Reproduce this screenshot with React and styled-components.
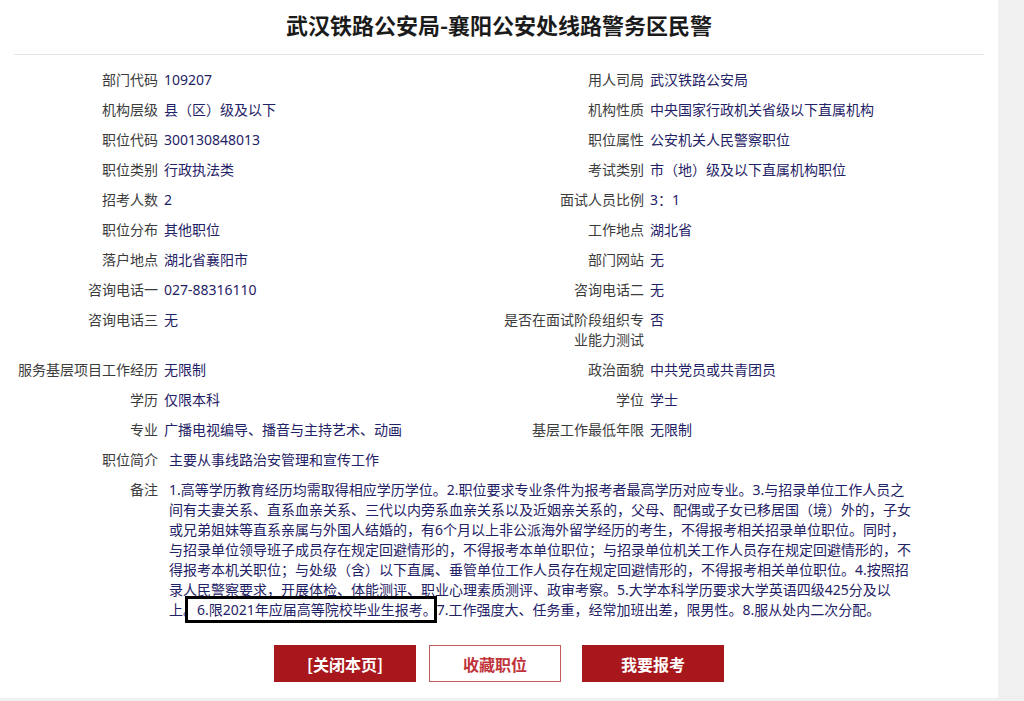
import React from 'react';
import styled, { createGlobalStyle } from 'styled-components';

const GlobalStyle = createGlobalStyle`
  body {
    margin: 0;
    background: #f0f0f0;
    font-family: "Noto Sans", "Noto Sans CJK SC", sans-serif;
  }
`;

const rows = [
    ['部门代码', '109207', '用人司局', '武汉铁路公安局'],
    ['机构层级', '县（区）级及以下', '机构性质', '中央国家行政机关省级以下直属机构'],
    ['职位代码', '300130848013', '职位属性', '公安机关人民警察职位'],
    ['职位类别', '行政执法类', '考试类别', '市（地）级及以下直属机构职位'],
    ['招考人数', '2', '面试人员比例', '3：1'],
    ['职位分布', '其他职位', '工作地点', '湖北省'],
    ['落户地点', '湖北省襄阳市', '部门网站', '无'],
    ['咨询电话一', '027-88316110', '咨询电话二', '无'],
    ['咨询电话三', '无', '是否在面试阶段组织专业能力测试', '否'],
    ['服务基层项目工作经历', '无限制', '政治面貌', '中共党员或共青团员'],
    ['学历', '仅限本科', '学位', '学士'],
    ['专业', '广播电视编导、播音与主持艺术、动画', '基层工作最低年限', '无限制'],
];

const remarks = [
    '1.高等学历教育经历均需取得相应学历学位。2.职位要求专业条件为报考者最高学历对应专业。3.与招录单位工作人员之',
    '间有夫妻关系、直系血亲关系、三代以内旁系血亲关系以及近姻亲关系的，父母、配偶或子女已移居国（境）外的，子女',
    '或兄弟姐妹等直系亲属与外国人结婚的，有6个月以上非公派海外留学经历的考生，不得报考相关招录单位职位。同时，',
    '与招录单位领导班子成员存在规定回避情形的，不得报考本单位职位；与招录单位机关工作人员存在规定回避情形的，不',
    '得报考本机关职位；与处级（含）以下直属、垂管单位工作人员存在规定回避情形的，不得报考相关单位职位。4.按照招',
    '录人民警察要求，开展体检、体能测评、职业心理素质测评、政审考察。5.大学本科学历要求大学英语四级425分及以',
];

export default function App() {
    return (
        <>
            <GlobalStyle />
            <Page>
                <Header>
                    <Title>武汉铁路公安局-襄阳公安处线路警务区民警</Title>
                </Header>
                <InfoGrid>
                    {rows.map(r => (
                        <React.Fragment key={r[0]}>
                            <Label>{r[0]}</Label>
                            <Value>{r[1]}</Value>
                            <Label>{r[2]}</Label>
                            <Value>{r[3]}</Value>
                        </React.Fragment>
                    ))}
                    <Label>职位简介</Label>
                    <Value $wide>主要从事线路治安管理和宣传工作</Value>
                    <Label>备注</Label>
                    <Value $wide>
                        {remarks.map(line => (
                            <RemarkLine key={line}>{line}</RemarkLine>
                        ))}
                        <RemarkLine>
                            上。<Marked>6.限2021年应届高等院校毕业生报考。</Marked>7.工作强度大、任务重，经常加班出差，限男性。8.服从处内二次分配。
                        </RemarkLine>
                    </Value>
                </InfoGrid>
                <ButtonRow>
                    <Button>[关闭本页]</Button>
                    <OutlineButton>收藏职位</OutlineButton>
                    <Button>我要报考</Button>
                </ButtonRow>
            </Page>
        </>
    );
}

//styled components
const Page = styled.div`
    width: 998px;
    height: 698px;
    background: #fff;
    overflow: hidden;
`

const Header = styled.div`
    margin: 0 14px;
    height: 55px;
    border-bottom: 1px solid #e5e5e5;
    box-sizing: border-box;
    padding-top: 10px;
`

const Title = styled.h1`
    margin: 0;
    text-align: center;
    font-family: "Noto Sans CJK SC", sans-serif;
    font-size: 22px;
    line-height: 28px;
    font-weight: 700;
    color: #1b1b1b;
`

const InfoGrid = styled.div`
    display: grid;
    grid-template-columns: 147px 339px 147px 1fr;
    margin: 10px 0 0 15px;
    width: 970px;
    font-size: 14px;
    line-height: 20px;
`

const Label = styled.div`
    text-align: right;
    padding: 5px 4px 5px 0;
    color: #3c3c3c;
`

const Value = styled.div`
    padding: 5px 0 5px ${p => (p.$wide ? '7px' : '2px')};
    color: #1f2266;
    grid-column: ${p => (p.$wide ? '2 / 5' : 'auto')};
`

const RemarkLine = styled.div`
    white-space: nowrap;
`

const Marked = styled.span`
    position: relative;
    &::after {
        content: "";
        position: absolute;
        left: -12px;
        right: 0;
        top: -4px;
        bottom: -4px;
        border: 3px solid #000;
    }
`

const ButtonRow = styled.div`
    display: flex;
    justify-content: center;
    gap: 13px;
    margin-top: 20px;
`

const Button = styled.button`
    width: 142px;
    height: 37px;
    border: none;
    background: #a8171c;
    color: #fff;
    font-family: "Noto Sans CJK SC", sans-serif;
    font-size: 16px;
    font-weight: 700;
    padding: 0;
`

const OutlineButton = styled(Button)`
    width: 132px;
    background: #fff;
    border: 1px solid #c65a60;
    color: #c0333a;
    margin-right: 8px;
`
